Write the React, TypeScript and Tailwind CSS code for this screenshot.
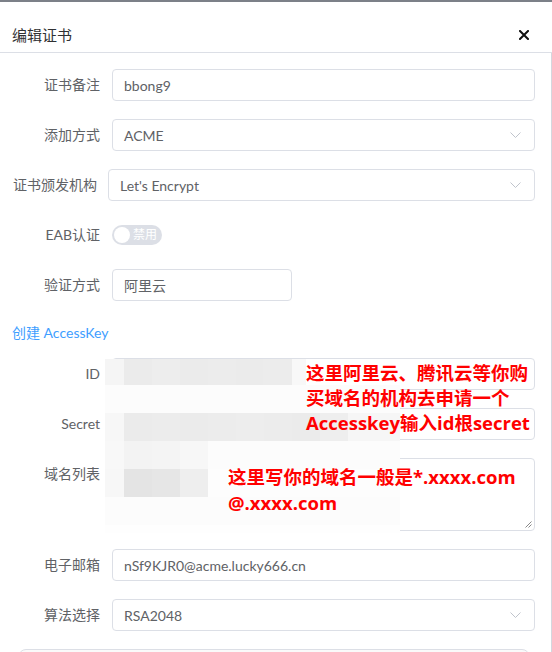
import React from 'react';

const font = "font-['Lato','Noto_Sans_CJK_SC',sans-serif]";
const labelCls = 'shrink-0 whitespace-nowrap text-right text-[14px] leading-[32px] text-[#606266]';
const boxCls = 'h-8 rounded-[4px] border border-[#dcdfe6] bg-white flex items-center text-[14px] text-[#606266]';

const Chevron = () => (
  <svg width="11" height="6" viewBox="0 0 11 6" className="shrink-0">
    <path d="M0.5 0.5 L5.5 5.5 L10.5 0.5" fill="none" stroke="#c0c4cc" strokeWidth="1" />
  </svg>
);

interface RowProps {
  label: string;
  wide?: boolean;
  children: React.ReactNode;
}

const Row: React.FC<RowProps> = ({ label, wide, children }) => (
  <div className="flex mb-[18px]">
    <label className={`${labelCls} ${wide ? 'w-[96px] pr-[11px]' : 'w-[100px] pr-3'}`}>{label}</label>
    <div className="flex-1 min-w-0">{children}</div>
  </div>
);

const Input = ({ value }: { value: string }) => (
  <div className={`${boxCls} px-[11px]`}>{value}</div>
);

const Select = ({ value }: { value: string }) => (
  <div className={`${boxCls} pl-[11px] pr-[13px] justify-between`}>
    <span>{value}</span>
    <Chevron />
  </div>
);

export default function App() {
  return (
    <div className={`relative w-[552px] h-[652px] overflow-hidden bg-white ${font}`}>
      <div className="h-[2px] bg-[#7c8088]" />

      {/* header */}
      <div className="h-[51px] pt-4 pl-3 pr-[23px] flex items-center justify-between border-b border-[#dcdfe6]">
        <span className="text-[15px] leading-[22px] text-[#303133]">编辑证书</span>
        <svg width="10" height="10" viewBox="0 0 10 10">
          <path d="M1 1 L9 9 M9 1 L1 9" stroke="#111" strokeWidth="2" strokeLinecap="square" />
        </svg>
      </div>

      {/* body */}
      <div className="h-[600px] border-r border-[#d4d7de] pt-4 pl-3 pr-4">
        <Row label="证书备注"><Input value="bbong9" /></Row>
        <Row label="添加方式"><Select value="ACME" /></Row>
        <Row label="证书颁发机构" wide><Select value="Let's Encrypt" /></Row>
        <Row label="EAB认证">
          <div className="h-8 flex items-center">
            <div className="w-[50px] h-5 rounded-full bg-[#dcdfe6] flex items-center pl-[2px]">
              <div className="w-4 h-4 rounded-full bg-white" />
              <span className="ml-[3px] text-[12px] leading-none text-white">禁用</span>
            </div>
          </div>
        </Row>
        <Row label="验证方式">
          <div className={`${boxCls} w-[180px] px-[11px]`}>阿里云</div>
        </Row>

        <div className="h-[28px] mb-[11px] text-[14px] leading-[28px] text-[#409eff]">创建 AccessKey</div>

        <Row label="ID"><Input value="" /></Row>
        <Row label="Secret"><Input value="" /></Row>
        <Row label="域名列表">
          <div className="relative h-[73px] rounded-[4px] border border-[#dcdfe6]">
            <svg width="7" height="7" viewBox="0 0 7 7" className="absolute right-[2px] bottom-[2px]">
              <path d="M6.5 0.5 L0.5 6.5 M6.5 3.5 L3.5 6.5" stroke="#888" strokeWidth="1" />
            </svg>
          </div>
        </Row>
        <Row label="电子邮箱"><Input value="nSf9KJR0@acme.lucky666.cn" /></Row>
        <Row label="算法选择"><Select value="RSA2048" /></Row>

        <div className="ml-[6px] mr-[5px] h-[40px] rounded-[8px] border border-[#dcdfe6] bg-[#fafafa]" />
      </div>

      {/* mosaic laid over the key fields */}
      <div className="absolute left-[105px] top-[359px] w-[295px] h-[174px] flex flex-col">
        <div className="h-[26px] flex">
          <div className="w-[19px] bg-[#f5f5f5]" />
          <div className="w-[28px] bg-[#ebebeb]" />
          <div className="w-[28px] bg-[#ededed]" />
          <div className="w-[28px] bg-[#ebebeb]" />
          <div className="w-[28px] bg-[#ececec]" />
          <div className="w-[27px] bg-[#ebebeb]" />
          <div className="w-[29px] bg-[#ececec]" />
          <div className="w-[14px] bg-[#f8f8f8]" />
          <div className="flex-1 bg-white" />
        </div>
        <div className="h-[28px] bg-[#fcfcfc]" />
        <div className="h-[28px] flex">
          <div className="w-[19px] bg-[#f7f7f7]" />
          <div className="w-[28px] bg-[#ebebeb]" />
          <div className="w-[28px] bg-[#ececec]" />
          <div className="w-[28px] bg-[#ebebeb]" />
          <div className="w-[28px] bg-[#ececec]" />
          <div className="w-[28px] bg-[#ededed]" />
          <div className="w-[28px] bg-[#ececec]" />
          <div className="w-[28px] bg-[#ebebeb]" />
          <div className="w-[28px] bg-[#eeeeee]" />
          <div className="flex-1 bg-[#f6f6f6]" />
        </div>
        <div className="h-[28px] flex">
          <div className="w-[19px] bg-[#f8f8f8]" />
          <div className="w-[28px] bg-[#f3f3f3]" />
          <div className="w-[28px] bg-[#f4f4f4]" />
          <div className="w-[28px] bg-[#f7f7f7]" />
          <div className="flex-1 bg-[#fcfcfc]" />
        </div>
        <div className="h-[28px] flex">
          <div className="w-[19px] bg-[#f7f7f7]" />
          <div className="w-[28px] bg-[#e4e4e4]" />
          <div className="w-[28px] bg-[#e6e6e6]" />
          <div className="w-[28px] bg-[#eeeeee]" />
          <div className="flex-1 bg-[#fdfdfd]" />
        </div>
        <div className="h-[28px] bg-[#fcfcfc]" />
        <div className="h-[8px] bg-[#fefefe]" />
      </div>

      {/* red notes */}
      <div className="absolute left-[306px] top-[360px] text-[18.5px] leading-[25px] font-bold text-[#ff0000] font-['Open_Sans','Noto_Sans_CJK_SC',sans-serif] whitespace-nowrap">
        <div>这里阿里云、腾讯云等你购</div>
        <div>买域名的机构去申请一个</div>
        <div>Accesskey输入id根secret</div>
      </div>
      <div className="absolute left-[228px] top-[464px] text-[18.5px] leading-[26px] font-bold text-[#ff0000] font-['Open_Sans','Noto_Sans_CJK_SC',sans-serif] whitespace-nowrap">
        <div>这里写你的域名一般是*.xxxx.com</div>
        <div>@.xxxx.com</div>
      </div>
    </div>
  );
}
